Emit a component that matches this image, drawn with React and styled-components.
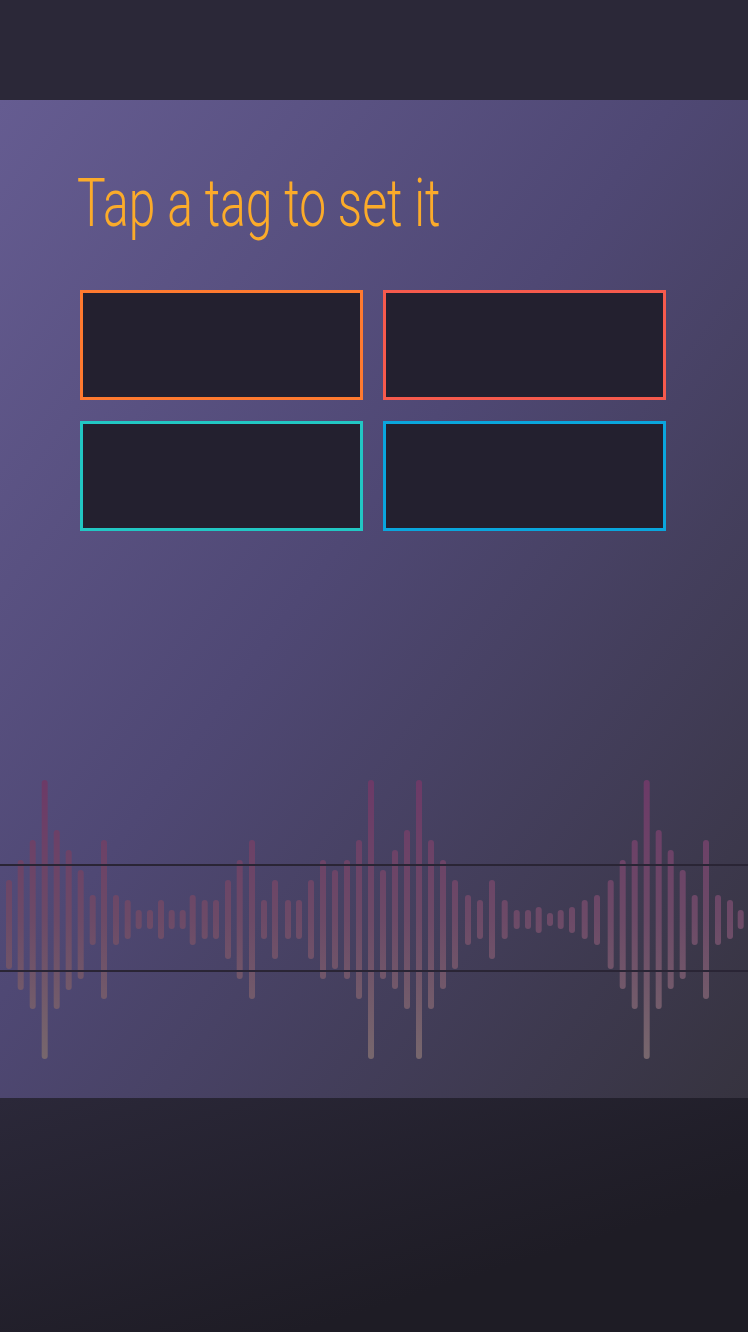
import React from "react";
import styled, { createGlobalStyle } from "styled-components";

const Global = createGlobalStyle`
  html, body { margin: 0; padding: 0; background: #1f1d27; }
  body { font-family: Roboto, "Liberation Sans", sans-serif; }
  * { box-sizing: border-box; }
`;

const Page = styled.div`
  width: 748px;
  height: 1332px;
  display: flex;
  flex-direction: column;
  overflow: hidden;
`;

const TopBar = styled.header`
  height: 100px;
  flex: none;
  background: #2b2838;
`;

const Stage = styled.main`
  height: 998px;
  flex: none;
  display: flex;
  flex-direction: column;
  background: linear-gradient(to bottom right, #655c91 0%, #4f4874 45%, #36333f 100%);
`;

const Content = styled.section`
  padding: 71px 82px 0 80px;
  display: flex;
  flex-direction: column;
`;

const Title = styled.h1`
  margin: 0 0 0 -3px;
  font-family: Roboto, "Liberation Sans", sans-serif;
  font-weight: 300;
  font-size: 66px;
  line-height: 66px;
  height: 66px;
  color: #fbab2a;
  white-space: nowrap;
  transform: scaleX(0.728);
  transform-origin: left center;
`;

const TagGrid = styled.div`
  margin-top: 53px;
  display: grid;
  grid-template-columns: 283px 283px;
  grid-auto-rows: 110px;
  column-gap: 20px;
  row-gap: 21px;
`;

const Tag = styled.button`
  border: 3px solid ${(p) => p.$color};
  background: #23202f;
  padding: 0;
  margin: 0;
  cursor: pointer;
`;

const Wave = styled.svg`
  display: block;
  margin-top: 239px;
  width: 748px;
  height: 300px;
  flex: none;
`;

const BottomBar = styled.footer`
  flex: 1;
  background: linear-gradient(to bottom right, #2b2839 0%, #1e1c25 70%);
`;

const tags = ["#ff7a30", "#f65a4d", "#22c7c4", "#0aa6dd"];

const xs = [
  9, 20.7, 32.7, 44.7, 56.7, 68.7, 80.7, 92.7, 104, 116, 127.7, 138.7, 150,
  161, 171.7, 182.7, 192.7, 204.7, 216, 228, 239.7, 252, 264, 275, 288, 299,
  311, 323, 335, 347, 359, 371, 383, 395, 407, 419, 431, 443, 455, 468, 480,
  492, 504.7, 516.7, 528, 538.7, 550, 560.7, 572, 584.7, 597, 610.7, 622.7,
  634.7, 646.7, 658.7, 670.7, 682.7, 694.7, 706, 718, 730, 740.7,
];

const bars = [
  [880, 969], [860, 990], [840, 1009], [780, 1059], [830, 1009], [850, 990],
  [870, 979], [895, 945], [840, 999], [895, 945], [900, 939], [910, 929],
  [910, 929], [900, 939], [910, 929], [910, 929], [895, 945], [900, 939],
  [900, 939], [880, 959], [860, 979], [840, 999], [900, 939], [880, 959],
  [900, 939], [900, 939], [880, 959], [860, 979], [870, 969], [860, 979],
  [840, 999], [780, 1059], [870, 979], [850, 989], [830, 1009], [780, 1059],
  [840, 1009], [860, 989], [880, 969], [895, 945], [900, 939], [880, 959],
  [900, 939], [910, 929], [910, 929], [907, 933], [913, 926], [910, 929],
  [907, 933], [900, 939], [895, 945], [880, 969], [860, 989], [840, 1009],
  [780, 1059], [830, 1009], [850, 989], [870, 979], [895, 945], [840, 999],
  [895, 945], [900, 939], [910, 929],
];

const TOP = 770;

export default function App() {
  return (
    <>
      <Global />
      <Page>
        <TopBar />
        <Stage>
          <Content>
            <Title>Tap a tag to set it</Title>
            <TagGrid>
              {tags.map((c) => (
                <Tag key={c} $color={c} aria-label="tag" />
              ))}
            </TagGrid>
          </Content>
          <Wave viewBox="0 0 748 300">
            <defs>
              <linearGradient id="barGrad" gradientUnits="userSpaceOnUse" x1="0" y1="10" x2="0" y2="290">
                <stop offset="0" stopColor="#6c3a67" />
                <stop offset="0.5" stopColor="#6c4a67" />
                <stop offset="1" stopColor="#77676d" />
              </linearGradient>
            </defs>
            {bars.map(([t, b], i) => (
              <line
                key={i}
                x1={xs[i]}
                x2={xs[i]}
                y1={t - TOP + 3}
                y2={b - TOP - 3}
                stroke="url(#barGrad)"
                strokeWidth="6"
                strokeLinecap="round"
              />
            ))}
            <rect x="0" y="94" width="748" height="2" fill="#2a2535" />
            <rect x="0" y="200" width="748" height="2" fill="#2a2535" />
          </Wave>
        </Stage>
        <BottomBar />
      </Page>
    </>
  );
}
